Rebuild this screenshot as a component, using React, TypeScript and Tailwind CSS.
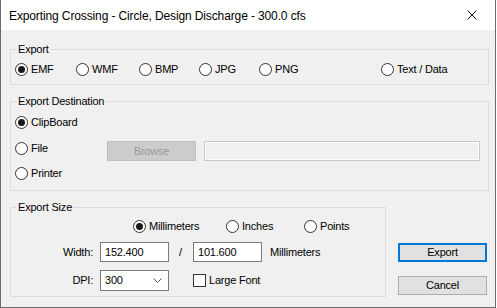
import React from "react";

const body = "font-['Liberation_Sans',Arial,sans-serif] text-[11px] leading-[13px] tracking-[-0.2px] text-black";

function Radio({ checked, label, className = "" }: { checked?: boolean; label: string; className?: string }) {
  return (
    <div className={`flex items-center h-[13px] ${className}`}>
      <span className="w-[13px] h-[13px] shrink-0 rounded-full border border-[#333333] bg-white flex items-center justify-center">
        {checked && <span className="w-[7px] h-[7px] rounded-full bg-[#1a1a1a]" />}
      </span>
      <span className="ml-[3px] whitespace-nowrap">{label}</span>
    </div>
  );
}

function Group({ title, className = "", children }: { title: string; className?: string; children: React.ReactNode }) {
  return (
    <fieldset className={`border border-[#dcdcdc] p-0 m-0 ${className}`}>
      <legend className="ml-[5px] px-[2px] leading-[14px]">{title}</legend>
      {children}
    </fieldset>
  );
}

export default function App() {
  return (
    <div className={`w-[496px] h-[308px] bg-[#f0f0f0] border-l border-r border-b border-[#6b6b6b] flex flex-col ${body}`}>
      {/* Title bar */}
      <div className="h-[30px] bg-white flex items-center shrink-0">
        <span className="ml-[8px] pt-[2px] font-['Liberation_Sans',Arial,sans-serif] text-[12px] tracking-[-0.12px] text-black whitespace-nowrap">
          Exporting Crossing - Circle, Design Discharge - 300.0 cfs
        </span>
        <div className="ml-auto w-[46px] h-[30px] flex items-center justify-center">
          <svg width="10" height="10" viewBox="0 0 10 10">
            <path d="M0.5 0.5 L9.5 9.5 M9.5 0.5 L0.5 9.5" stroke="#111" strokeWidth="1" />
          </svg>
        </div>
      </div>

      {/* Export group */}
      <Group title="Export" className="ml-[9px] mt-[12px] w-[479px]">
        <div className="flex pl-[4px] pt-[7px] pb-[8px]">
          <Radio checked label="EMF" className="w-[61px]" />
          <Radio label="WMF" className="w-[63px]" />
          <Radio label="BMP" className="w-[60px]" />
          <Radio label="JPG" className="w-[60px]" />
          <Radio label="PNG" className="w-[122px]" />
          <Radio label="Text / Data" />
        </div>
      </Group>

      {/* Export Destination */}
      <Group title="Export Destination" className="ml-[9px] mt-[9px] w-[479px]">
        <div className="flex flex-col pl-[4px] pt-[8px] pb-[10px]">
          <Radio checked label="ClipBoard" />
          <div className="flex items-start mt-[12px] h-[20px]">
            <Radio label="File" className="mt-[1px] w-[92px]" />
            <div className="w-[89px] h-[20px] bg-[#cccccc] border border-[#bfbfbf] flex items-center justify-center text-[#9a9a9a]">
              Browse
            </div>
            <div className="ml-[8px] w-[276px] h-[20px] border border-[#c8c8c8] bg-[#f0f0f0] shadow-[inset_1px_1px_0_#ffffff,inset_-1px_-1px_0_#ffffff]" />
          </div>
          <Radio label="Printer" className="mt-[6px]" />
        </div>
      </Group>

      {/* Export Size + buttons */}
      <div className="flex mt-[9px] ml-[9px]">
        <Group title="Export Size" className="w-[376px]">
          <div className="flex flex-col pt-[6px] pb-[5px]">
            <div className="flex pl-[122px]">
              <Radio checked label="Millimeters" className="w-[93px]" />
              <Radio label="Inches" className="w-[78px]" />
              <Radio label="Points" />
            </div>
            <div className="flex items-center mt-[9px] h-[20px]">
              <span className="w-[82px] text-right">Width:</span>
              <div className="ml-[7px] w-[69px] h-[20px] bg-white border border-[#7a7a7a] flex items-center pl-[4px]">152.400</div>
              <span className="ml-[10px] w-[14px]">/</span>
              <div className="w-[69px] h-[20px] bg-white border border-[#7a7a7a] flex items-center pl-[4px]">101.600</div>
              <span className="ml-[8px]">Millimeters</span>
            </div>
            <div className="flex items-center mt-[8px] h-[21px]">
              <span className="w-[82px] text-right">DPI:</span>
              <div className="ml-[7px] w-[69px] h-[21px] bg-white border border-[#7a7a7a] flex items-center pl-[4px] pr-[4px]">
                <span>300</span>
                <svg className="ml-auto mr-[2px]" width="9" height="5" viewBox="0 0 9 5">
                  <path d="M0.5 0.5 L4.5 4.5 L8.5 0.5" stroke="#555" strokeWidth="1" fill="none" />
                </svg>
              </div>
              <span className="ml-[24px] w-[13px] h-[13px] border border-[#333333] bg-white" />
              <span className="ml-[3px]">Large Font</span>
            </div>
          </div>
        </Group>
        <div className="flex flex-col ml-[12px] pt-[43px]">
          <div className="w-[89px] h-[19px] bg-[#e1e1e1] border-2 border-[#0078d7] flex items-center justify-center">Export</div>
          <div className="mt-[14px] w-[89px] h-[19px] bg-[#e1e1e1] border border-[#adadad] flex items-center justify-center">Cancel</div>
        </div>
      </div>
    </div>
  );
}
